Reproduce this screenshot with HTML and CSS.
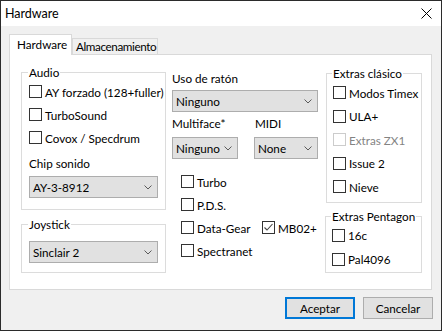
FILE: index.html
```html
<!DOCTYPE html>
<html lang="es">
<head>
<meta charset="utf-8">
<title>Hardware</title>
<link rel="stylesheet" href="styles.css">
</head>
<body>
<div class="window">
  <div class="titlebar">
    <span class="title">Hardware</span>
    <svg class="close" width="11" height="11" viewBox="0 0 11 11"><path d="M0.5 0.5L10.5 10.5M10.5 0.5L0.5 10.5" stroke="#000" stroke-width="1" fill="none"/></svg>
  </div>
  <div class="content">
    <div class="tabs">
      <div class="tab active">Hardware</div>
      <div class="tab">Almacenamiento</div>
    </div>
    <div class="panel">
      <div class="col col-left">
        <fieldset class="group audio">
          <legend>Audio</legend>
          <div class="check"><span class="box"></span><span>AY forzado (128+fuller)</span></div>
          <div class="check"><span class="box"></span><span>TurboSound</span></div>
          <div class="check"><span class="box"></span><span>Covox / Specdrum</span></div>
          <div class="label chip-label">Chip sonido</div>
          <div class="select sel-chip"><span>AY-3-8912</span><svg class="chev" width="8" height="5" viewBox="0 0 8 5"><path d="M0.5 0.5L4 4L7.5 0.5" stroke="#5a5a5a" fill="none"/></svg></div>
        </fieldset>
        <fieldset class="group joystick">
          <legend>Joystick</legend>
          <div class="select sel-joy"><span>Sinclair 2</span><svg class="chev" width="8" height="5" viewBox="0 0 8 5"><path d="M0.5 0.5L4 4L7.5 0.5" stroke="#5a5a5a" fill="none"/></svg></div>
        </fieldset>
      </div>
      <div class="col col-mid">
        <div class="label mouse-label">Uso de ratón</div>
        <div class="select sel-mouse"><span>Ninguno</span><svg class="chev" width="8" height="5" viewBox="0 0 8 5"><path d="M0.5 0.5L4 4L7.5 0.5" stroke="#5a5a5a" fill="none"/></svg></div>
        <div class="pair-labels">
          <span class="label lab-multi">Multiface*</span>
          <span class="label">MIDI</span>
        </div>
        <div class="pair-selects">
          <div class="select sel-multi"><span>Ninguno</span><svg class="chev" width="8" height="5" viewBox="0 0 8 5"><path d="M0.5 0.5L4 4L7.5 0.5" stroke="#5a5a5a" fill="none"/></svg></div>
          <div class="select sel-midi"><span>None</span><svg class="chev" width="8" height="5" viewBox="0 0 8 5"><path d="M0.5 0.5L4 4L7.5 0.5" stroke="#5a5a5a" fill="none"/></svg></div>
        </div>
        <div class="mid-checks">
          <div class="check"><span class="box"></span><span>Turbo</span></div>
          <div></div>
          <div class="check"><span class="box"></span><span>P.D.S.</span></div>
          <div></div>
          <div class="check"><span class="box"></span><span>Data-Gear</span></div>
          <div class="check"><span class="box checked"><svg width="11" height="11" viewBox="0 0 11 11"><path d="M1.5 5.5L4 8L9.5 2" stroke="#444" stroke-width="1.1" fill="none"/></svg></span><span>MB02+</span></div>
          <div class="check"><span class="box"></span><span>Spectranet</span></div>
          <div></div>
        </div>
      </div>
      <div class="col col-right">
        <fieldset class="group classic">
          <legend>Extras clásico</legend>
          <div class="check"><span class="box"></span><span>Modos Timex</span></div>
          <div class="check"><span class="box"></span><span>ULA+</span></div>
          <div class="check disabled"><span class="box"></span><span>Extras ZX1</span></div>
          <div class="check"><span class="box"></span><span>Issue 2</span></div>
          <div class="check"><span class="box"></span><span>Nieve</span></div>
        </fieldset>
        <fieldset class="group pentagon">
          <legend>Extras Pentagon</legend>
          <div class="check"><span class="box"></span><span>16c</span></div>
          <div class="check"><span class="box"></span><span>Pal4096</span></div>
        </fieldset>
      </div>
    </div>
    <div class="buttons">
      <div class="btn primary">Aceptar</div>
      <div class="btn">Cancelar</div>
    </div>
  </div>
</div>
</body>
</html>
```

FILE: styles.css
```css
* { box-sizing: border-box; }
body {
  margin: 0;
  font-family: "Segoe UI", Lato, "Noto Sans", sans-serif;
  font-size: 11.7px;
  color: #000;
}
.window {
  width: 442px;
  height: 331px;
  border: 1px solid #2b2b2b;
  background: #f0f0f0;
  display: flex;
  flex-direction: column;
}
.titlebar {
  height: 25px;
  background: #fff;
  display: flex;
  align-items: center;
  justify-content: space-between;
  padding: 0 9px 0 4px;
  flex: none;
}
.title { font-size: 12.5px; line-height: 16px; }
.close { display: block; }
.content {
  flex: 1;
  padding: 8px 9px 0 8px;
  display: flex;
  flex-direction: column;
}
.tabs {
  display: flex;
  align-items: flex-end;
  height: 20px;
  flex: none;
}
.tab {
  height: 16px;
  border: 1px solid #d9d9d9;
  border-bottom: none;
  background: #f0f0f0;
  line-height: 15px;
  padding: 0 0 0 3px;
  width: 86px;
  white-space: nowrap;
  letter-spacing: -0.4px;
}
.tab.active {
  position: relative;
  z-index: 1;
  height: 21px;
  margin-bottom: -1px;
  width: 63px;
  background: #fff;
  line-height: 19px;
  padding-left: 7px;
  letter-spacing: 0;
}
.panel {
  height: 236px;
  border: 1px solid #d9d9d9;
  background: #fff;
  display: flex;
  align-items: flex-start;
  padding-left: 11px;
  flex: none;
}
.col { display: flex; flex-direction: column; }
.col-left { width: 145px; padding-top: 9px; }
.col-mid { width: 146px; margin-left: 6px; padding-top: 15px; }
.col-right { width: 96px; margin-left: 8px; padding-top: 10px; }

.group {
  margin: 0;
  border: 1px solid #dcdcdc;
  padding: 0 0 0 7px;
  min-width: 0;
}
.group legend {
  padding: 0 1px;
  margin-left: -1px;
  line-height: 16px;
  white-space: nowrap;
}
.audio { height: 146px; }
.joystick { margin-top: 6px; height: 57px; }
.classic { padding-left: 6px; height: 138px; }
.pentagon { padding-left: 6px; margin-top: 5px; margin-left: -1px; width: 97px; height: 65px; }

.check {
  display: flex;
  align-items: center;
  height: 23px;
  white-space: nowrap;
}
.classic .check { height: 23.5px; }
.pentagon .check { height: 24px; }
.pentagon legend + .check { margin-top: -1px; }
.box {
  width: 13px;
  height: 13px;
  border: 1px solid #333;
  background: #fff;
  margin-right: 3px;
  flex: none;
  display: flex;
  align-items: center;
  justify-content: center;
}
.box svg { display: block; }
.disabled { color: #838383; }
.disabled .box { border-color: #cccccc; }

.label { line-height: 16px; white-space: nowrap; }
.chip-label { margin-top: 6px; }
.select {
  height: 22px;
  background: #e1e1e1;
  border: 1px solid #adadad;
  display: flex;
  align-items: center;
  justify-content: space-between;
  padding: 0 5px 0 3px;
  white-space: nowrap;
}
.chev { display: block; flex: none; }
.sel-chip { width: 129px; margin-top: 5px; }
.sel-joy { width: 129px; margin-top: 9px; }
.sel-mouse { width: 146px; margin-top: 4px; }
.pair-labels { display: flex; margin-top: 3px; }
.lab-multi { width: 83px; }
.pair-selects { display: flex; margin-top: 6px; }
.sel-multi { width: 66px; }
.sel-midi { width: 64px; margin-left: 16px; }
.mid-checks {
  display: grid;
  grid-template-columns: 81px auto;
  margin-top: 11px;
  margin-left: 9px;
}

.buttons {
  display: flex;
  justify-content: flex-end;
  gap: 8px;
  margin-top: 7px;
  margin-right: -1px;
}
.btn {
  width: 70px;
  height: 22px;
  background: #e1e1e1;
  border: 1px solid #adadad;
  display: flex;
  align-items: center;
  justify-content: center;
}
.btn.primary { border: 2px solid #0078d7; }
```
